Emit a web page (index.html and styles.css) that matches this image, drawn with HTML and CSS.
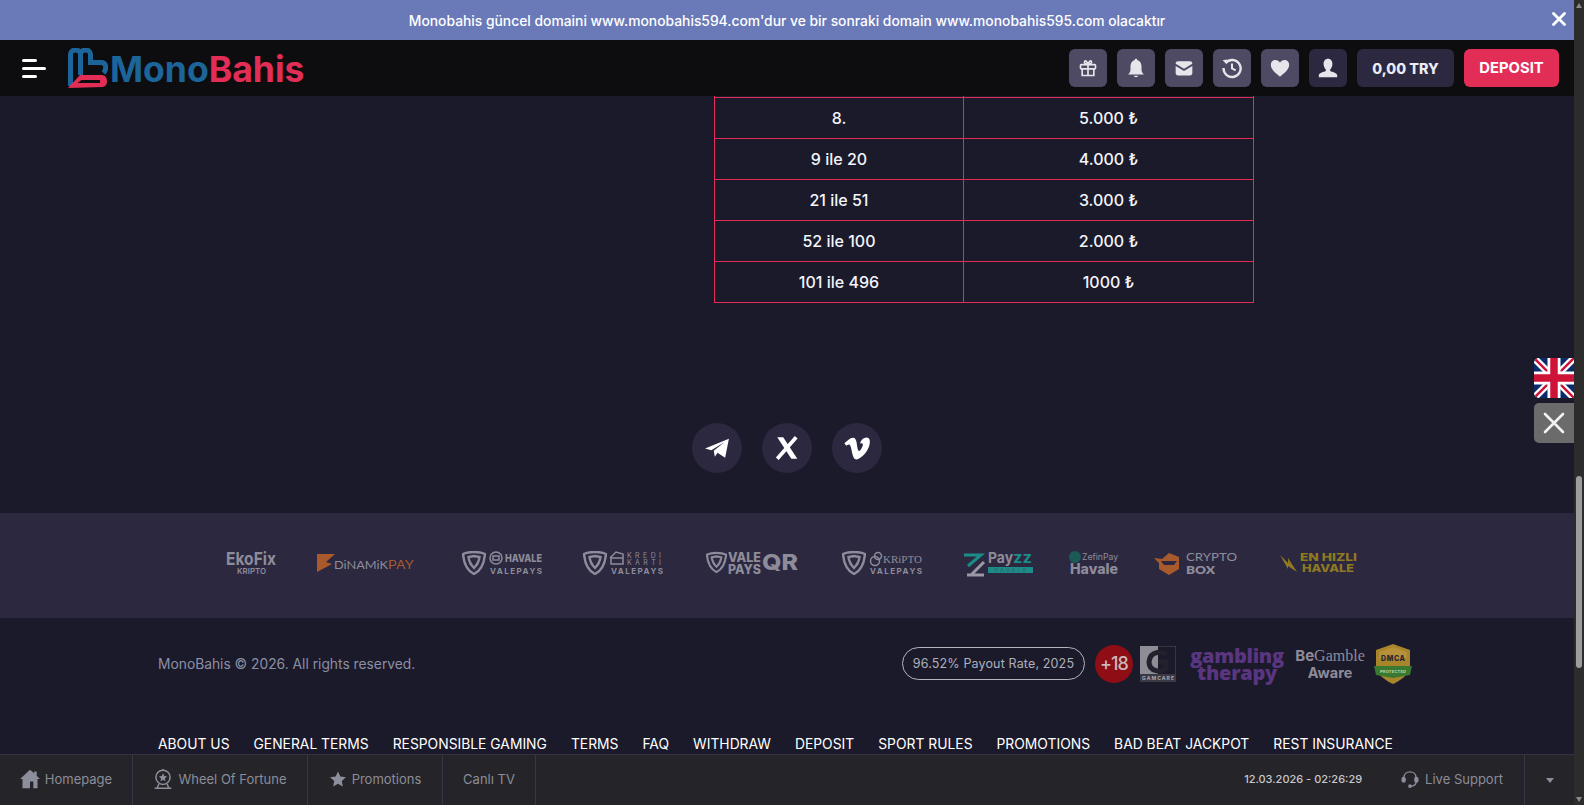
FILE: index.html
```html
<!DOCTYPE html>
<html lang="tr">
<head>
<meta charset="utf-8">
<title>MonoBahis</title>
<link rel="stylesheet" href="styles.css">
</head>
<body>
<svg class="defs" width="0" height="0" aria-hidden="true">
  <symbol id="shield" viewBox="0 0 24 24">
    <path d="M12 23 C6 20 2 14 1 3 C5 1 8 1 12 1 C16 1 19 1 23 3 C22 14 18 20 12 23Z" fill="none" stroke="currentColor" stroke-width="2.4"/>
    <path d="M12 17 C9 14 7 10 6.5 6 L12 5 L17.5 6 C17 10 15 14 12 17Z" fill="none" stroke="currentColor" stroke-width="2.4"/>
  </symbol>
</svg>
<div class="app">
  <div class="page">
    <div class="notice">
      <span class="notice-text">Monobahis güncel domaini www.monobahis594.com'dur ve bir sonraki domain www.monobahis595.com olacaktır</span>
      <button class="notice-close" aria-label="Kapat">
        <svg viewBox="0 0 14 14" width="14" height="14"><path d="M1.5 1.5 12.5 12.5M12.5 1.5 1.5 12.5" stroke="#fff" stroke-width="2.8" stroke-linecap="round"/></svg>
      </button>
    </div>
    <header class="topbar">
      <div class="burger"><i class="b1"></i><i class="b2"></i><i class="b3"></i></div>
      <div class="logo">
        <svg class="logo-mark" viewBox="0 0 40 40" width="40" height="40">
          <path d="M2.500 38 V6 A5 4 0 0 1 12.500 6 V27 M12.500 6 A5 4 0 0 1 22.500 6 V14.500 H33 C38.500 14.500 39 21 35.500 25" fill="none" stroke="#1c659b" stroke-width="5"/>
          <path d="M0 40 L12 27 H34 C40 27 41 38 35 39 Z" fill="#e22d57"/>
          <path d="M13.500 32 H32 V35 H9.500Z" fill="#0d0d0f"/>
        </svg>
        <span class="logo-text"><span class="logo-blue">Mono</span><span class="logo-red">Bahis</span></span>
      </div>
      <div class="top-actions">
        <a class="tile"><svg viewBox="0 0 24 24" width="20" height="20" fill="none" stroke="#e4e6ea" stroke-width="2"><rect x="3" y="8" width="18" height="5" rx="1"/><path d="M5 13 V21 H19 V13 M12 8 V21 M12 8 C9 8 7 6 8 4 C9 2.5 11 4 12 8 C13 4 15 2.5 16 4 C17 6 15 8 12 8Z"/></svg></a>
        <a class="tile"><svg viewBox="0 0 24 24" width="22" height="22" fill="#e4e6ea"><path d="M12 2 C13 2 13.6 2.7 13.6 3.6 C16.6 4.4 18 7 18 10 V14 C18 16 19 17.5 20.5 19 H3.5 C5 17.5 6 16 6 14 V10 C6 7 7.4 4.4 10.4 3.6 C10.4 2.7 11 2 12 2Z"/><path d="M9.5 20.5 H14.5 C14 22.5 10 22.5 9.5 20.5Z"/></svg></a>
        <a class="tile"><svg viewBox="0 0 24 24" width="20" height="20" fill="#e4e6ea"><path d="M2 7 C2 5 3 4 5 4 H19 C21 4 22 5 22 7 L12 13 Z"/><path d="M2 9.5 L12 15.5 L22 9.5 V18 C22 20 21 21 19 21 H5 C3 21 2 20 2 18Z"/></svg></a>
        <a class="tile"><svg viewBox="0 0 24 24" width="22" height="22" fill="none" stroke="#e4e6ea" stroke-width="2.6"><path d="M5 6.5 A9.3 9.3 0 1 1 2.8 12"/><path d="M1.8 3.5 L6.5 2.6 L6.2 8 Z" fill="#e4e6ea" stroke="none"/><path d="M12 7 V12.5 L16 14.5" stroke-width="2.2"/></svg></a>
        <a class="tile"><svg viewBox="0 0 24 24" width="22" height="22" fill="#e4e6ea"><path d="M12 21.5 C5 16 2 12.5 2 8.5 C2 5.5 4.3 3.3 7 3.3 C9 3.3 11 4.4 12 6.3 C13 4.4 15 3.3 17 3.3 C19.7 3.3 22 5.5 22 8.5 C22 12.5 19 16 12 21.5Z"/></svg></a>
        <a class="tile tile-dark"><svg viewBox="0 0 24 24" width="22" height="22" fill="#e4e6ea"><path d="M12 2 C15 2 16.8 4.4 16.8 7.6 C16.8 10.4 15.6 12.5 14.4 13.6 V15.3 C17 16.5 21 17 22 19.5 V22 H2 V19.5 C3 17 7 16.5 9.6 15.3 V13.6 C8.4 12.5 7.2 10.4 7.2 7.6 C7.2 4.4 9 2 12 2Z"/></svg></a>
        <a class="balance">0,00 TRY</a>
        <a class="deposit">DEPOSIT</a>
      </div>
    </header>
    <main class="content">
      <table class="prize">
        <tr class="stub"><td></td><td></td></tr>
        <tr><td>8.</td><td>5.000 ₺</td></tr>
        <tr><td>9 ile 20</td><td>4.000 ₺</td></tr>
        <tr><td>21 ile 51</td><td>3.000 ₺</td></tr>
        <tr><td>52 ile 100</td><td>2.000 ₺</td></tr>
        <tr><td>101 ile 496</td><td>1000 ₺</td></tr>
      </table>
      <div class="socials">
        <a class="social"><svg viewBox="0 0 24 24" width="26" height="26" fill="#fff"><path d="M1 12.5 L23 3.5 L19.5 21 L12.5 16.3 L10 20 L9 14.5 L19 6.5 L6.8 14 Z"/></svg></a>
        <a class="social"><svg viewBox="0 0 24 24" width="26" height="26"><path d="M3 2 H8.5 L21.5 22 H16Z" fill="#fff"/><path d="M20.5 2 L3 22" stroke="#fff" stroke-width="3.4" fill="none"/></svg></a>
        <a class="social"><svg viewBox="0 0 24 24" width="28" height="28" fill="#fff"><path d="M23 7 C22.7 12.5 19 18 13 21.5 C10 23 8.7 20 8 17 C7.2 13.5 6.8 10.5 5.8 9.3 C5 8.5 3.6 9.6 2.8 10 L1.2 8 C3.5 6 6 3.4 8.3 3.3 C10.5 3.2 11.3 5 11.7 7.5 C12.2 10.5 12.6 14.5 13.8 14.5 C15 14.5 17 11 17 9.3 C17 7.8 15.7 7.7 14.4 8.3 C15.6 4.7 18 2.8 20.5 3 C22.3 3.1 23.1 4.7 23 7Z"/></svg></a>
      </div>
      <section class="payments">
        <svg class="pay" viewBox="0 0 51 26" width="51" height="26"><text class="t-eko" x="0" y="15" textLength="50" lengthAdjust="spacingAndGlyphs">EkoFix</text><text class="t-eko-s" x="11" y="24" textLength="29" lengthAdjust="spacingAndGlyphs">KRIPTO</text></svg>
        <svg class="pay" viewBox="0 0 105 20" width="105" height="20"><path d="M0 1 H18 L9 9 L15 11 L0 19Z" fill="#a85a2c"/><text class="t-dina" x="17" y="16" textLength="54" lengthAdjust="spacingAndGlyphs">DiNAMiK</text><text class="t-dina-o" x="71" y="16" textLength="26" lengthAdjust="spacingAndGlyphs">PAY</text></svg>
        <svg class="pay" viewBox="0 0 81 26" width="81" height="26"><use href="#shield" x="0" y="1" width="24" height="24" class="gray"/><circle cx="34" cy="8" r="6" class="ring"/><rect x="31" y="6" width="6" height="4" class="ring"/><text class="t-hav" x="43" y="12" textLength="37" lengthAdjust="spacingAndGlyphs">HAVALE</text><text class="t-vale" x="28" y="24" textLength="52">VALEPAYS</text></svg>
        <svg class="pay" viewBox="0 0 83 26" width="83" height="26"><use href="#shield" x="0" y="1" width="24" height="24" class="gray"/><path d="M27 8 L33 2 L40 4 V8 M28 8 H40 V14 H28Z" class="ring"/><text class="t-kre" x="44" y="8" textLength="34">KREDI</text><text class="t-kre" x="44" y="15" textLength="34">KARTI</text><text class="t-vale" x="28" y="24" textLength="52">VALEPAYS</text></svg>
        <svg class="pay" viewBox="0 0 96 26" width="96" height="26"><use href="#shield" x="0" y="1" width="21" height="23" class="gray"/><text class="t-qv" x="22" y="12" textLength="33" lengthAdjust="spacingAndGlyphs">VALE</text><text class="t-qv" x="22" y="24" textLength="33" lengthAdjust="spacingAndGlyphs">PAYS</text><text class="t-qr" x="56" y="20" textLength="36" lengthAdjust="spacingAndGlyphs">QR</text></svg>
        <svg class="pay" viewBox="0 0 81 26" width="81" height="26"><use href="#shield" x="0" y="1" width="24" height="24" class="gray"/><circle cx="33" cy="11" r="4.500" class="ring"/><circle cx="36" cy="6" r="3.500" class="ring"/><text class="t-kri" x="41" y="13" textLength="39" lengthAdjust="spacingAndGlyphs">KRiPTO</text><text class="t-vale" x="28" y="24" textLength="52">VALEPAYS</text></svg>
        <svg class="pay" viewBox="0 0 70 26" width="70" height="26"><path d="M1 5 H18 L5 16 M5 5 H2" fill="none" stroke="#1d8c88" stroke-width="3"/><path d="M4 25 H21 M21 12 L8 25" fill="none" stroke="#9a98a6" stroke-width="3"/><text class="t-pay" x="25" y="13" textLength="25" lengthAdjust="spacingAndGlyphs">Pay</text><text class="t-zz" x="50" y="13" textLength="19" lengthAdjust="spacingAndGlyphs">zz</text><rect x="25" y="17" width="45" height="6" fill="#1d8c88"/><text class="t-hv" x="31" y="22.300" textLength="32">HAVALE</text></svg>
        <svg class="pay pay-in4" viewBox="0 0 50 26" width="50" height="26"><circle cx="6" cy="7" r="6" fill="#1c5a55"/><text class="t-zef" x="13" y="10" textLength="36" lengthAdjust="spacingAndGlyphs">ZefinPay</text><text class="t-hvl" x="1" y="24" textLength="48" lengthAdjust="spacingAndGlyphs">Havale</text></svg>
        <svg class="pay pay-in5" viewBox="0 0 86 26" width="86" height="26"><path d="M0 8 L8 9 L15 3 L25 7 V19 L15 25 L5 19 V13 Z" fill="#a85a2c"/><path d="M7 11 H23 L20 15 H10Z" fill="#2b2840"/><text class="t-cry" x="32" y="11" textLength="51" lengthAdjust="spacingAndGlyphs">CRYPTO</text><text class="t-box" x="32" y="24" textLength="29" lengthAdjust="spacingAndGlyphs">BOX</text></svg>
        <svg class="pay" viewBox="0 0 78 22" width="78" height="22"><path d="M0 3 L8 11 L8 6 L17 20 L8 14 L8 17 Z" fill="#8f7a20"/><text class="t-en" x="20" y="9" textLength="57" lengthAdjust="spacingAndGlyphs">EN HIZLI</text><text class="t-en" x="22" y="20" textLength="52" lengthAdjust="spacingAndGlyphs">HAVALE</text></svg>
      </section>
      <footer class="footer">
        <div class="footer-top">
          <span class="copy">MonoBahis © 2026. All rights reserved.</span>
          <div class="badges">
            <span class="pill">96.52% Payout Rate, 2025</span>
            <span class="age">+18</span>
            <svg class="gc" viewBox="0 0 36 36" width="36" height="36"><rect width="36" height="36" fill="#1b1a2a" stroke="#55545f"/><path d="M0 0 H18 V28 H0Z" fill="#8e8d96"/><path d="M18 28 H0 V36 H36 V28Z" fill="#3a3944"/><path d="M26 9 C24 5 10 4 9 16 C9 26 22 27 26 22 V16 H18" fill="none" stroke="#23222c" stroke-width="5"/><text class="t-gc" x="2" y="34" textLength="32">GAMCARE</text></svg>
            <span class="therapy"><span>gambling</span><span>therapy</span></span>
            <span class="begamble"><span class="be"><b>Be</b>Gamble</span><span class="aware">Aware</span></span>
            <svg class="dmca" viewBox="0 0 38 40" width="38" height="40"><path d="M19 0 L36 6 V22 C36 30 26 37 19 40 C12 37 2 30 2 22 V6Z" fill="#a8842a"/><path d="M19 3 L33 8 V14 H5 V8Z" fill="#b7913a"/><path d="M0 22 L38 22 L36 31 L19 34 L2 31Z" fill="#3a7a30"/><text class="t-dm" x="7" y="17" textLength="24">DMCA</text><text class="t-prot" x="6" y="29" textLength="26">PROTECTED</text></svg>
          </div>
        </div>
        <nav class="links">
          <a>ABOUT US</a><a>GENERAL TERMS</a><a>RESPONSIBLE GAMING</a><a>TERMS</a><a>FAQ</a><a>WITHDRAW</a><a>DEPOSIT</a><a>SPORT RULES</a><a>PROMOTIONS</a><a>BAD BEAT JACKPOT</a><a>REST INSURANCE</a>
        </nav>
      </footer>
      <div class="lang">
        <svg class="flag" viewBox="0 0 40 40" width="40" height="40"><rect width="40" height="40" fill="#0b2a6b"/><path d="M0 0 40 40M40 0 0 40" stroke="#fff" stroke-width="7"/><path d="M0 0 40 40M40 0 0 40" stroke="#cf1237" stroke-width="2.400"/><path d="M20 0V40M0 20H40" stroke="#fff" stroke-width="13"/><path d="M20 0V40M0 20H40" stroke="#cf1237" stroke-width="7.500"/></svg>
        <button class="lang-close" aria-label="Kapat"><svg viewBox="0 0 24 24" width="24" height="24"><path d="M3 3 21 21M21 3 3 21" stroke="#f2f2f2" stroke-width="2.600" stroke-linecap="round"/></svg></button>
      </div>
    </main>
    <nav class="dock">
      <a class="dock-item d1"><svg viewBox="0 0 24 24" width="20" height="20" fill="#8c8f9b"><path d="M12 1 L17 5 V3 H20 V8 L24 12 H21 V23 H16 V15 H12 V23 H3 V12 H0Z"/></svg>Homepage</a>
      <a class="dock-item d2"><svg viewBox="0 0 24 24" width="20" height="20" fill="none" stroke="#8c8f9b" stroke-width="1.800"><circle cx="12" cy="10" r="8.500"/><path d="M12 5 L13.500 8.500 L17 9 L14.300 11.300 L15 15 L12 13 L9 15 L9.700 11.300 L7 9 L10.500 8.500Z" fill="#8c8f9b" stroke="none"/><path d="M7 18 L5 23 M17 18 L19 23 M2 23 H22 M12 0 V2"/></svg>Wheel Of Fortune</a>
      <a class="dock-item d3"><svg viewBox="0 0 24 24" width="18" height="18" fill="#8c8f9b"><path d="M12 2 L15.100 8.600 L22.500 9.500 L17 14.500 L18.500 22 L12 18.300 L5.500 22 L7 14.500 L1.500 9.500 L8.900 8.600Z"/></svg>Promotions</a>
      <a class="dock-item d4">Canlı TV</a>
      <span class="dock-date">12.03.2026 - 02:26:29</span>
      <a class="dock-support"><svg viewBox="0 0 24 24" width="18" height="18" fill="none" stroke="#8c8f9b" stroke-width="1.800"><path d="M4 14 V10 C4 0 20 0 20 10 V14"/><rect x="1.500" y="10" width="4" height="6" rx="2" fill="#8c8f9b"/><rect x="18.500" y="10" width="4" height="6" rx="2" fill="#8c8f9b"/><path d="M20 16 C20 20 17 21.500 13 21.500"/><circle cx="12" cy="21.500" r="1.500" fill="#8c8f9b"/></svg>Live Support</a>
      <a class="dock-more"><i class="caret"></i></a>
    </nav>
  </div>
  <aside class="scrollbar">
    <i class="arrow-up"></i>
    <i class="thumb"></i>
    <i class="arrow-down"></i>
  </aside>
</div>
</body>
</html>
```
FILE: styles.css
```css
* { box-sizing: border-box; }
html, body { margin: 0; height: 100%; overflow: hidden; }
body { background: #1b1a2a; font-family: Inter, "Liberation Sans", sans-serif; color: #fff; }
.defs { position: absolute; }
button { background: none; border: 0; padding: 0; }
a { color: inherit; text-decoration: none; }

.app { display: flex; height: 805px; }
.page { flex: 1; min-width: 0; display: flex; flex-direction: column; }

.scrollbar { width: 10px; background: #2c2c2c; display: flex; flex-direction: column; align-items: center; position: relative; }
.thumb { width: 6px; height: 192px; margin-top: 468px; background: #9c9c9c; border-radius: 3px; }
.arrow-up { margin-top: 3px; border: 3.500px solid transparent; border-top: 0; border-bottom: 5px solid #8a8a8a; }
.arrow-down { margin-top: auto; margin-bottom: 3px; border: 3.500px solid transparent; border-bottom: 0; border-top: 5px solid #8a8a8a; }

.notice { height: 40px; background: #6a7ab9; display: flex; align-items: center; justify-content: center; position: relative; flex: none; padding-top: 1px; }
.notice-text { font-size: 13.850px; font-weight: 500; color: #fff; }
.notice-close { position: absolute; right: 6px; top: 12px; width: 16px; height: 16px; display: flex; }

.topbar { height: 56px; background: #0d0d0f; display: flex; align-items: center; padding: 0 15px 0 22px; flex: none; position: relative; z-index: 2; }
.burger { width: 24px; height: 19px; display: flex; flex-direction: column; justify-content: space-between; margin-right: 22px; }
.burger i { display: block; height: 3px; background: #fff; border-radius: 2px; }
.b1, .b3 { width: 15px; }
.b2 { width: 24px; }
.logo { display: flex; align-items: center; gap: 2px; }
.logo-text { font-size: 35.500px; font-weight: 700; line-height: 40px; letter-spacing: 0; padding-top: 3px; }
.logo-blue { color: #1c659b; }
.logo-red { color: #e22d57; }
.top-actions { margin-left: auto; display: flex; gap: 10px; }
.tile { width: 38px; height: 38px; border-radius: 6px; background: #4e4a64; display: flex; align-items: center; justify-content: center; }
.tile-dark { background: #2b2840; }
.balance { width: 97px; height: 38px; border-radius: 6px; background: #2b2840; display: flex; align-items: center; justify-content: center; font-size: 14.300px; font-weight: 800; color: #e8ecf5; }
.deposit { width: 95px; height: 38px; border-radius: 6px; background: #e22d57; display: flex; align-items: center; justify-content: center; font-size: 14.800px; font-weight: 700; color: #fff; }

.content { flex: 1; min-height: 0; overflow: hidden; position: relative; }

.prize { border-collapse: collapse; width: 540px; margin: -1px 0 0 714px; table-layout: fixed; font-size: 16px; font-weight: 500; color: #f3f5fa; }
.prize td { border: 1px solid #e22d57; height: 41px; padding: 0; text-align: center; }
.prize td:first-child { width: 249px; }
.prize .stub td { height: 2px; border-top: 0; }

.socials { display: flex; justify-content: center; gap: 20px; margin-top: 120px; }
.social { width: 50px; height: 50px; border-radius: 50%; background: #2b2840; display: flex; align-items: center; justify-content: center; }

.payments { height: 105px; margin-top: 40px; background: #2b2840; display: flex; align-items: center; justify-content: center; gap: 40px; padding: 0 0 4px 10px; }
.pay { flex: none; overflow: visible; font-family: Inter, sans-serif; }
.pay-in4 { margin-left: -4px; }
.pay-in5 { margin-left: -5px; }
.gray { color: #8e8c9a; }
.ring { fill: none; stroke: #8e8c9a; stroke-width: 1.500; }
.pay text { fill: #8e8c9a; }
.t-eko { font-size: 18px; font-weight: 700; }
.t-eko-s { font-size: 8px; font-weight: 600; }
.t-dina { font-size: 12px; font-family: Lato, sans-serif; }
.pay .t-dina-o { font-size: 12px; fill: #a85a2c; }
.t-hav { font-size: 10px; font-weight: 800; }
.t-vale { font-size: 8px; font-weight: 700; }
.t-kre { font-size: 7px; }
.t-qv { font-size: 12.500px; font-weight: 800; }
.t-qr { font-size: 22px; font-weight: 800; }
.t-kri { font-size: 10px; font-family: "Liberation Serif", serif; }
.t-pay { font-size: 15px; font-weight: 700; }
.pay .t-zz { font-size: 15px; font-weight: 700; fill: #1d8c88; }
.pay .t-hv { font-size: 5px; fill: #2b6d70; font-weight: 700; }
.t-zef { font-size: 9px; }
.t-hvl { font-size: 14px; font-weight: 800; }
.t-cry { font-size: 12px; font-family: Lato, sans-serif; }
.t-box { font-size: 12px; font-weight: 800; font-family: Lato, sans-serif; }
.pay .t-en { font-size: 10.500px; font-weight: 800; fill: #8f7a20; }

.footer { padding: 0 162px 0 158px; }
.footer-top { display: flex; align-items: center; justify-content: space-between; height: 92px; }
.copy { font-size: 13.800px; color: #8b8fa6; }
.badges { display: flex; align-items: center; }
.pill { width: 183px; height: 33px; border: 1px solid #b4b4bc; border-radius: 17px; display: flex; align-items: center; justify-content: center; font-size: 12.500px; color: #aeb0bc; letter-spacing: .15px; }
.age { width: 38px; height: 38px; border-radius: 50%; background: #8f0d14; margin-left: 10px; display: flex; align-items: center; justify-content: center; font-size: 18px; font-weight: 500; color: #c8b8ba; letter-spacing: -1px; }
.gc { margin-left: 7px; }
.t-gc { font-size: 5px; fill: #a9a8b0; font-weight: 700; }
.therapy { margin-left: 14px; width: 94px; display: flex; flex-direction: column; align-items: center; font-size: 20px; font-weight: 800; line-height: 17px; color: #5a3580; letter-spacing: -.3px; font-family: "Open Sans", sans-serif; }
.begamble { margin-left: 11px; width: 70px; display: flex; flex-direction: column; align-items: center; color: #8e8c9a; }
.be { font-size: 16px; line-height: 18px; font-family: "Liberation Serif", serif; white-space: nowrap; }
.be b { font-family: Inter, sans-serif; font-size: 15px; }
.aware { font-size: 14.500px; font-weight: 700; line-height: 16px; }
.dmca { margin-left: 9px; }
.t-dm { font-size: 7px; font-weight: 800; fill: #2a2434; }
.t-prot { font-size: 4px; font-weight: 700; fill: #b9d6a8; }

.links { display: flex; gap: 24px; margin-top: 24px; font-size: 13.850px; color: #fff; line-height: 20px; white-space: nowrap; }

.lang { position: absolute; right: 0; top: 262px; width: 40px; display: flex; flex-direction: column; gap: 5px; }
.flag { border-radius: 5px 0 0 5px; display: block; }
.lang-close { height: 40px; background: #6b6b6b; border-radius: 5px 0 0 5px; display: flex; align-items: center; justify-content: center; }

.dock { height: 51px; flex: none; background: #252429; border-top: 1px solid #353246; display: flex; align-items: center; font-size: 13px; color: #8b8d98; position: relative; z-index: 2; }
.dock-item { height: 100%; display: flex; align-items: center; justify-content: center; gap: 5px; border-right: 1px solid #38364a; padding-bottom: 3px; }
.d1 { width: 133px; }
.d2 { width: 175px; }
.d3 { width: 135px; }
.d4 { width: 93px; }
.dock-date { margin-left: auto; font-size: 11px; font-weight: 500; color: #c9c9cd; margin-right: 39px; padding-bottom: 3px; }
.dock-support { display: flex; align-items: center; gap: 6px; margin-right: 21px; padding-bottom: 3px; }
.dock-more { width: 50px; height: 100%; border-left: 1px solid #38364a; display: flex; align-items: center; justify-content: center; }
.caret { border: 4px solid transparent; border-bottom: 0; border-top: 5px solid #8b8d98; }
```
